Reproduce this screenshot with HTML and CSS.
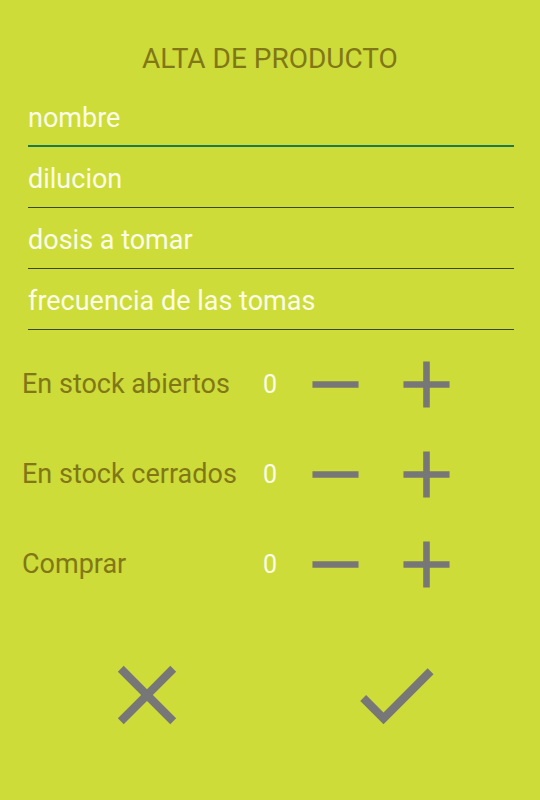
FILE: index.html
```html
<!DOCTYPE html>
<html lang="es">

<head>
    <meta charset="utf-8">
    <meta name="viewport" content="width=device-width, initial-scale=1.0">
    <title>Alta de producto</title>
    <link rel="stylesheet" href="styles.css">
</head>

<body>
    <h1 class="titulo">ALTA DE PRODUCTO</h1>

    <section class="campos">
        <div class="campo activo">nombre</div>
        <div class="campo">dilucion</div>
        <div class="campo">dosis a tomar</div>
        <div class="campo">frecuencia de las tomas</div>
    </section>

    <section class="contadores">
        <div class="fila">
            <span class="etiqueta">En stock abiertos</span>
            <span class="cantidad">0</span>
            <button class="icono menos"><svg viewBox="0 0 24 24"><path d="M19 13H5v-2h14v2z"/></svg></button>
            <button class="icono mas"><svg viewBox="0 0 24 24"><path d="M19 13h-6v6h-2v-6H5v-2h6V5h2v6h6v2z"/></svg></button>
        </div>
        <div class="fila">
            <span class="etiqueta">En stock cerrados</span>
            <span class="cantidad">0</span>
            <button class="icono menos"><svg viewBox="0 0 24 24"><path d="M19 13H5v-2h14v2z"/></svg></button>
            <button class="icono mas"><svg viewBox="0 0 24 24"><path d="M19 13h-6v6h-2v-6H5v-2h6V5h2v6h6v2z"/></svg></button>
        </div>
        <div class="fila">
            <span class="etiqueta">Comprar</span>
            <span class="cantidad">0</span>
            <button class="icono menos"><svg viewBox="0 0 24 24"><path d="M19 13H5v-2h14v2z"/></svg></button>
            <button class="icono mas"><svg viewBox="0 0 24 24"><path d="M19 13h-6v6h-2v-6H5v-2h6V5h2v6h6v2z"/></svg></button>
        </div>
    </section>

    <footer class="acciones">
        <button class="accion cancelar"><svg viewBox="0 0 24 24"><path d="M19 6.41L17.59 5 12 10.59 6.41 5 5 6.41 10.59 12 5 17.59 6.41 19 12 13.41 17.59 19 19 17.59 13.41 12z"/></svg></button>
        <button class="accion aceptar"><svg viewBox="0 0 24 24"><path d="M9 16.17L4.83 12l-1.42 1.41L9 19 21 7l-1.41-1.41z"/></svg></button>
    </footer>
</body>

</html>
```

FILE: styles.css
```css
body {
    margin: 0;
    background-color: #cddc39;
    font-family: Roboto, "Noto Sans", sans-serif;
    width: 540px;
    height: 800px;
    overflow: hidden;
}

.titulo {
    margin: 43px 0 11px;
    font-size: 28px;
    font-weight: 400;
    line-height: 32px;
    text-align: center;
    color: #827717;
}

.campos {
    padding: 0 26px 0 28px;
}

.campo {
    padding: 18px 0 14px;
    font-size: 27px;
    line-height: 28px;
    color: #fafce8;
    border-bottom: 1px solid #3c4a1a;
}

.campo.activo {
    padding-bottom: 13px;
    border-bottom: 2px solid #1b7a4e;
}

.contadores {
    margin-top: 9px;
}

.fila {
    display: grid;
    grid-template-columns: 241px 32px 80px 80px;
    align-items: center;
    height: 90px;
    padding-left: 22px;
}

.etiqueta {
    font-size: 27px;
    color: #827717;
}

.cantidad {
    font-size: 25px;
    color: #fafce8;
}

button {
    background: none;
    border: none;
    padding: 0;
    cursor: pointer;
}

.icono {
    width: 80px;
    height: 80px;
    display: flex;
    align-items: center;
    justify-content: center;
}

.icono svg {
    width: 79px;
    height: 79px;
    fill: #777777;
}

.mas {
    margin-left: 11px;
}

.acciones {
    display: flex;
    gap: 149px;
    margin-top: 36px;
    padding-left: 97px;
}

.accion {
    width: 100px;
    height: 100px;
}

.accion svg {
    width: 100px;
    height: 100px;
    fill: #777777;
}
```
